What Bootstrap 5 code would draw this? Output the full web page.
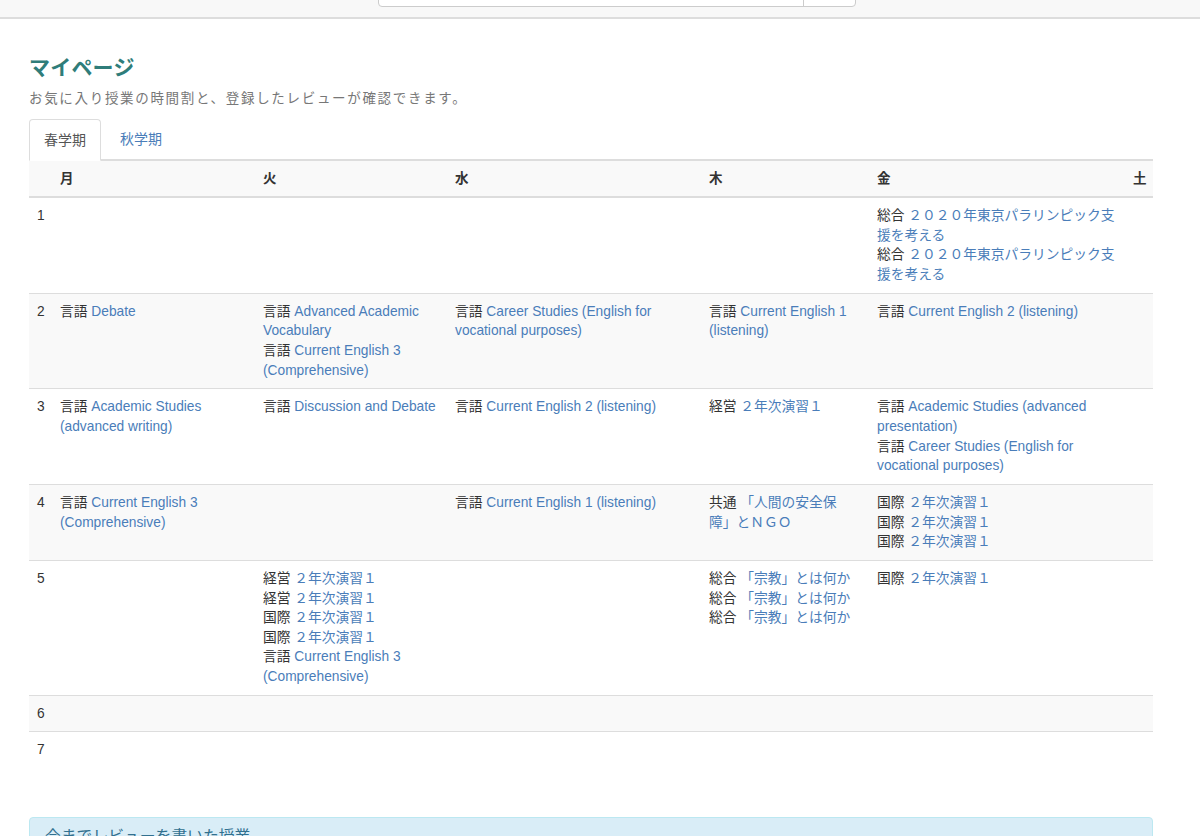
<!DOCTYPE html>
<html lang="ja">
<head>
<meta charset="utf-8">
<title>マイページ</title>
<link href="https://cdn.jsdelivr.net/npm/bootstrap@5.3.0/dist/css/bootstrap.min.css" rel="stylesheet">
<style>
html,body{height:836px;overflow:hidden}
body{font-family:"Liberation Sans","Noto Sans CJK JP",sans-serif;font-size:14px;line-height:19.65px;color:#333;background:#fff;text-spacing-trim:space-all}
a{color:#4a7db9;text-decoration:none}
.topbar{height:19px;background:#f8f8f8;border-bottom:2px solid #ddd;overflow:hidden;padding-bottom:11px}
.searchbox{width:478px;height:34px;margin-top:-27px;margin-left:34px;border:1px solid #ccc;border-radius:4px;background:#fff}
.searchbox .fieldpart{flex:1;border-right:1px solid #ccc}
.searchbox .btnpart{width:51px}
.mainwrap{padding:36px 47px 0 29px}
.pagetitle{font-size:21px;line-height:26px;font-weight:700;color:#2f7d7a;margin:0 0 9px;letter-spacing:.2px}
.pagesub{font-size:13.5px;line-height:18px;color:#777;margin:0 0 11px;letter-spacing:1.68px}
.tabrow{border-bottom:2px solid #ddd;gap:4px;height:42px}
.tabrow .tabitem{padding:10px 15px;height:42px;margin-bottom:-2px;line-height:20px;font-size:14px}
.tabrow .tabon{color:#555;background:#fff;border:1px solid #ddd;border-bottom-color:#fff;border-radius:4px 4px 0 0;padding:10px 14px}
.timetable{table-layout:fixed;width:1124px;margin:0;--bs-table-color:#333;color:#333}
.timetable th,.timetable td{padding:8px;vertical-align:top;border-top:0;border-bottom:1px solid #ddd;line-height:19.65px;font-size:13.75px}
.timetable thead th{background:#f9f9f9;border-bottom:2px solid #ddd;font-size:13.5px;line-height:19px;height:35px;padding-top:8px;padding-bottom:8px}
.timetable tbody tr:last-child td{border-bottom:0}
.timetable tbody tr.alt td{background:#f9f9f9}
.c0{width:23px}.c1{width:203px}.c2{width:192px}.c3{width:254px}.c4{width:168px}.c5{width:256px}.c6{width:28px}
.infobox{margin-top:49px;background:#d9edf7;border:1px solid #bce8f1;border-radius:4px;padding:8px 15px;color:#31708f;font-size:15.8px;line-height:22px;height:60px}
</style>
</head>
<body>
<div class="topbar d-flex justify-content-center">
  <div class="searchbox d-flex"><div class="fieldpart"></div><div class="btnpart"></div></div>
</div>
<div class="mainwrap">
  <h1 class="pagetitle">マイページ</h1>
  <p class="pagesub">お気に入り授業の時間割と、登録したレビューが確認できます。</p>
  <div class="tabrow d-flex">
    <a class="tabitem tabon" href="#">春学期</a>
    <a class="tabitem" href="#">秋学期</a>
  </div>
  <table class="table timetable">
    <colgroup><col class="c0"><col class="c1"><col class="c2"><col class="c3"><col class="c4"><col class="c5"><col class="c6"></colgroup>
    <thead><tr><th></th><th>月</th><th>火</th><th>水</th><th>木</th><th>金</th><th>土</th></tr></thead>
    <tbody>
      <tr><td>1</td><td></td><td></td><td></td><td></td>
        <td>総合 <a href="#">２０２０年東京パラリンピック支援を考える</a><br>総合 <a href="#">２０２０年東京パラリンピック支援を考える</a></td><td></td></tr>
      <tr class="alt"><td>2</td><td>言語 <a href="#">Debate</a></td>
        <td>言語 <a href="#">Advanced Academic Vocabulary</a><br>言語 <a href="#">Current English 3 (Comprehensive)</a></td>
        <td>言語 <a href="#">Career Studies (English for vocational purposes)</a></td>
        <td>言語 <a href="#">Current English 1 (listening)</a></td>
        <td>言語 <a href="#">Current English 2 (listening)</a></td><td></td></tr>
      <tr><td>3</td><td>言語 <a href="#">Academic Studies (advanced writing)</a></td>
        <td>言語 <a href="#">Discussion and Debate</a></td>
        <td>言語 <a href="#">Current English 2 (listening)</a></td>
        <td>経営 <a href="#">２年次演習１</a></td>
        <td>言語 <a href="#">Academic Studies (advanced presentation)</a><br>言語 <a href="#">Career Studies (English for vocational purposes)</a></td><td></td></tr>
      <tr class="alt"><td>4</td><td>言語 <a href="#">Current English 3 (Comprehensive)</a></td><td></td>
        <td>言語 <a href="#">Current English 1 (listening)</a></td>
        <td>共通 <a href="#">「人間の安全保障」とＮＧＯ</a></td>
        <td>国際 <a href="#">２年次演習１</a><br>国際 <a href="#">２年次演習１</a><br>国際 <a href="#">２年次演習１</a></td><td></td></tr>
      <tr><td>5</td><td></td>
        <td>経営 <a href="#">２年次演習１</a><br>経営 <a href="#">２年次演習１</a><br>国際 <a href="#">２年次演習１</a><br>国際 <a href="#">２年次演習１</a><br>言語 <a href="#">Current English 3 (Comprehensive)</a></td><td></td>
        <td>総合 <a href="#">「宗教」とは何か</a><br>総合 <a href="#">「宗教」とは何か</a><br>総合 <a href="#">「宗教」とは何か</a></td>
        <td>国際 <a href="#">２年次演習１</a></td><td></td></tr>
      <tr class="alt"><td>6</td><td></td><td></td><td></td><td></td><td></td><td></td></tr>
      <tr><td>7</td><td></td><td></td><td></td><td></td><td></td><td></td></tr>
    </tbody>
  </table>
  <div class="infobox">今までレビューを書いた授業</div>
</div>
<script src="https://cdn.jsdelivr.net/npm/bootstrap@5.3.0/dist/js/bootstrap.bundle.min.js"></script>
</body>
</html>
